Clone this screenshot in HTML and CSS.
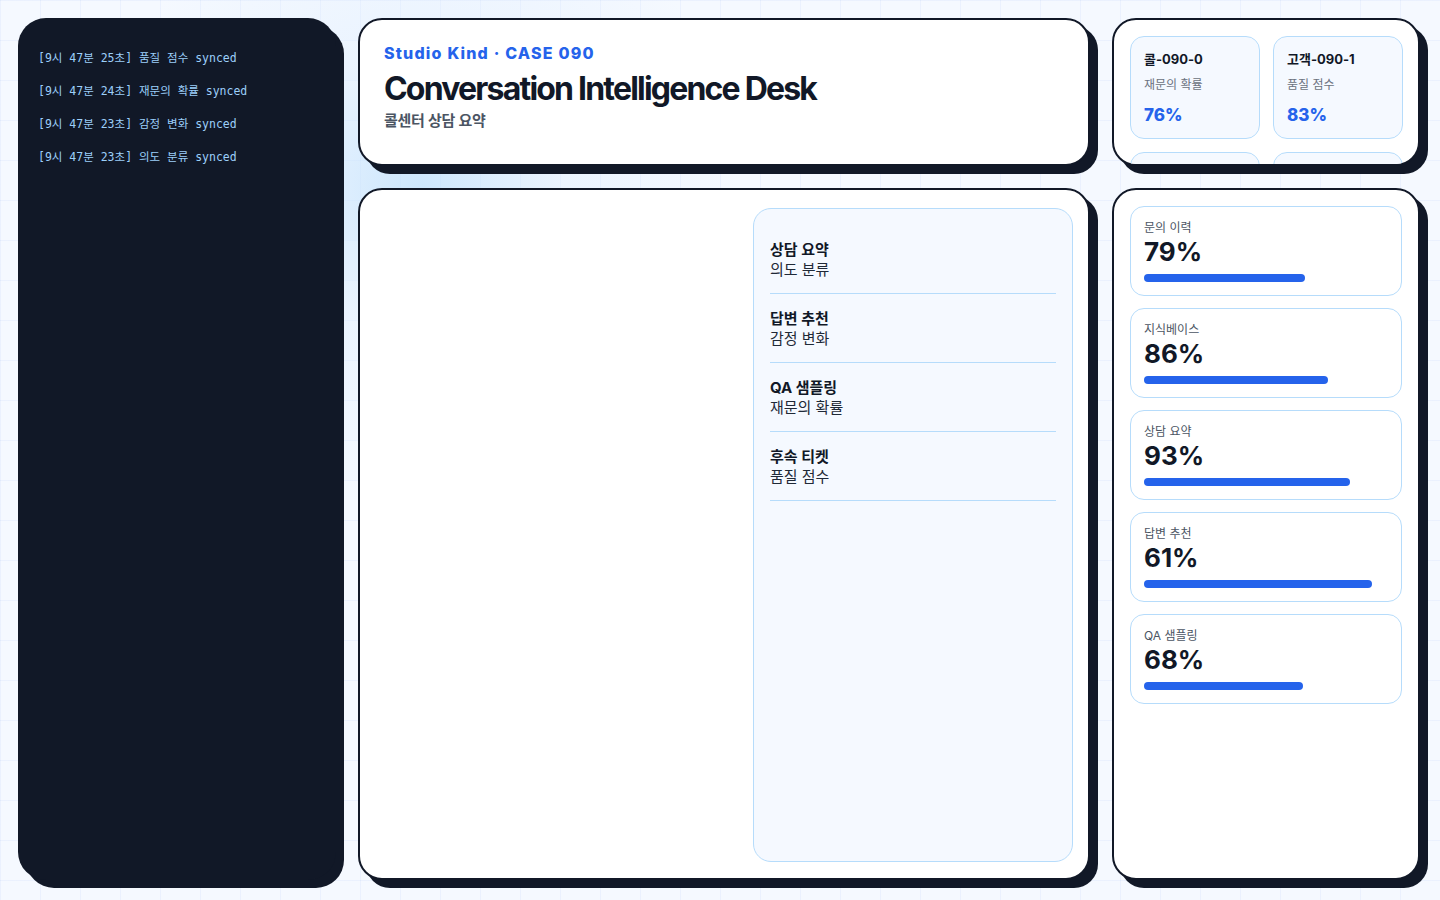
FILE: index.html
```html
<!DOCTYPE html>
<html lang="ko">
<head>
<meta charset="utf-8">
<title>Conversation Intelligence Desk</title>
<link rel="stylesheet" href="styles.css">
</head>
<body>
<div class="desk">
  <aside class="log">
    <div class="log-line">[9시 47분 25초] 품질 점수 synced</div>
    <div class="log-line">[9시 47분 24초] 재문의 확률 synced</div>
    <div class="log-line">[9시 47분 23초] 감정 변화 synced</div>
    <div class="log-line">[9시 47분 23초] 의도 분류 synced</div>
  </aside>

  <header class="card hero">
    <div class="eyebrow">Studio Kind · CASE 090</div>
    <h1 class="title">Conversation Intelligence Desk</h1>
    <div class="subtitle">콜센터 상담 요약</div>
  </header>

  <section class="card calls">
    <div class="call">
      <div class="call-name">콜-090-0</div>
      <div class="call-label">재문의 확률</div>
      <div class="call-value">76%</div>
    </div>
    <div class="call">
      <div class="call-name">고객-090-1</div>
      <div class="call-label">품질 점수</div>
      <div class="call-value">83%</div>
    </div>
    <div class="call"></div>
    <div class="call"></div>
  </section>

  <main class="card workspace">
    <div class="topics">
      <div class="topic">
        <div class="topic-title">상담 요약</div>
        <div class="topic-sub">의도 분류</div>
      </div>
      <div class="topic">
        <div class="topic-title">답변 추천</div>
        <div class="topic-sub">감정 변화</div>
      </div>
      <div class="topic">
        <div class="topic-title">QA 샘플링</div>
        <div class="topic-sub">재문의 확률</div>
      </div>
      <div class="topic">
        <div class="topic-title">후속 티켓</div>
        <div class="topic-sub">품질 점수</div>
      </div>
    </div>
  </main>

  <section class="card metrics">
    <div class="metric">
      <div class="metric-label">문의 이력</div>
      <div class="metric-value">79%</div>
      <div class="bar" style="width: 66.1%"></div>
    </div>
    <div class="metric">
      <div class="metric-label">지식베이스</div>
      <div class="metric-value">86%</div>
      <div class="bar" style="width: 75.5%"></div>
    </div>
    <div class="metric">
      <div class="metric-label">상담 요약</div>
      <div class="metric-value">93%</div>
      <div class="bar" style="width: 84.5%"></div>
    </div>
    <div class="metric">
      <div class="metric-label">답변 추천</div>
      <div class="metric-value">61%</div>
      <div class="bar" style="width: 93.5%"></div>
    </div>
    <div class="metric">
      <div class="metric-label">QA 샘플링</div>
      <div class="metric-value">68%</div>
      <div class="bar" style="width: 65.3%"></div>
    </div>
  </section>
</div>
</body>
</html>
```

FILE: styles.css
```css
* {
  box-sizing: border-box;
}

html, body {
  margin: 0;
  height: 100%;
}

body {
  font-family: Inter, "Noto Sans CJK KR", sans-serif;
  color: #111827;
  background-color: #f5f9ff;
  background-image:
    radial-gradient(circle at 420px 190px, rgba(191, 224, 252, 0.75) 0, rgba(219, 236, 254, 0.4) 140px, rgba(245, 249, 255, 0) 320px),
    linear-gradient(to right, rgba(37, 99, 235, 0.05) 1px, transparent 1px),
    linear-gradient(to bottom, rgba(37, 99, 235, 0.05) 1px, transparent 1px);
  background-size: 100% 100%, 40px 40px, 40px 40px;
  overflow: hidden;
}

.desk {
  display: grid;
  grid-template-columns: 318px 732px 308px;
  grid-template-rows: 148px 692px;
  gap: 22px;
  padding: 18px;
}

/* sync log */
.log {
  grid-row: 1 / 3;
  background: #111827;
  border-radius: 28px;
  box-shadow: 8px 8px 0 #111827;
  padding: 24px 20px;
}

.log-line {
  font-family: "DejaVu Sans Mono", "Noto Sans CJK KR", monospace;
  font-size: 11.5px;
  line-height: 33px;
  color: #9ccffa;
  white-space: nowrap;
}

/* shared card shell */
.card {
  background: #ffffff;
  border: 2px solid #111827;
  border-radius: 24px;
  box-shadow: 8px 8px 0 #111827;
}

.hero {
  padding: 22px 24px;
}

.eyebrow {
  font-size: 16px;
  font-weight: 800;
  letter-spacing: 1.2px;
  color: #2563eb;
  line-height: 22px;
}

.title {
  margin: 6px 0 0;
  font-size: 32px;
  font-weight: 700;
  letter-spacing: -1.8px;
  line-height: 38px;
  color: #111827;
}

.subtitle {
  margin-top: 3px;
  font-size: 15px;
  font-weight: 600;
  color: #4b5563;
  line-height: 20px;
  letter-spacing: -0.3px;
}

/* call tiles */
.calls {
  padding: 16px;
  overflow: hidden;
  display: grid;
  grid-template-columns: 130px 130px;
  grid-auto-rows: 103px;
  gap: 13px;
}

.call {
  background: #f5f9ff;
  border: 1px solid #b6dcfb;
  border-radius: 14px;
  padding: 13px 13px 12px;
}

.call-name {
  font-size: 13px;
  font-weight: 700;
  line-height: 18px;
  margin-bottom: 8px;
}

.call-label {
  font-size: 12px;
  line-height: 18px;
  color: #6b7280;
  margin-bottom: 10px;
}

.call-value {
  font-size: 17px;
  font-weight: 800;
  line-height: 22px;
  color: #2563eb;
}

/* workspace */
.workspace {
  display: flex;
  justify-content: flex-end;
  padding: 18px 15px 16px;
}

.topics {
  width: 320px;
  background: #f5f9ff;
  border: 1px solid #b6dcfb;
  border-radius: 18px;
  padding: 16px;
}

.topic {
  padding: 15px 0 13px;
  border-bottom: 1px solid #b6dcfb;
}

.topic-title {
  font-size: 15px;
  font-weight: 700;
  line-height: 20px;
}

.topic-sub {
  font-size: 15px;
  line-height: 20px;
  color: #1f2937;
}

/* metrics */
.metrics {
  padding: 16px;
  display: flex;
  flex-direction: column;
  gap: 12px;
}

.metric {
  height: 90px;
  border: 1px solid #b6dcfb;
  border-radius: 14px;
  padding: 13px 13px 12px;
}

.metric-label {
  font-size: 12px;
  line-height: 16px;
  color: #4b5563;
}

.metric-value {
  margin-top: 1px;
  font-size: 26px;
  font-weight: 700;
  line-height: 30px;
  color: #111827;
}

.bar {
  margin-top: 7px;
  height: 8px;
  border-radius: 4px;
  background: #2563eb;
}
```
